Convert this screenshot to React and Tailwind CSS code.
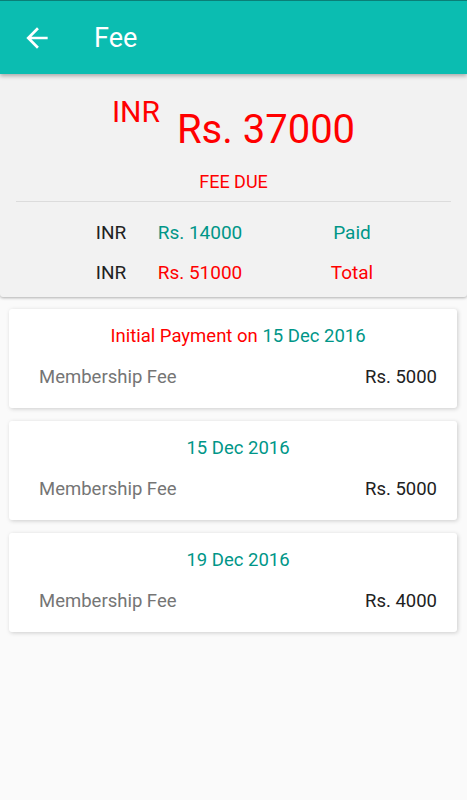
import React from 'react';

const payments = [
  { id: 1, initial: true, date: '15 Dec 2016', item: 'Membership Fee', amount: 'Rs. 5000' },
  { id: 2, initial: false, date: '15 Dec 2016', item: 'Membership Fee', amount: 'Rs. 5000' },
  { id: 3, initial: false, date: '19 Dec 2016', item: 'Membership Fee', amount: 'Rs. 4000' },
];

function BackArrow() {
  return (
    <svg viewBox="0 0 24 24" className="w-[32px] h-[32px] fill-white">
      <path d="M20 11H7.83l5.59-5.59L12 4l-8 8 8 8 1.41-1.41L7.83 13H20v-2z" />
    </svg>
  );
}

function SummaryRow({ amount, label, color }) {
  return (
    <div className="flex items-center pl-[80px] text-[19px] leading-none">
      <span className="w-[62px] text-center text-[#212121]">INR</span>
      <span className={`w-[116px] text-center ${color}`}>{amount}</span>
      <span className={`w-[100px] ml-[44px] text-center ${color}`}>{label}</span>
    </div>
  );
}

function PaymentCard({ payment }) {
  return (
    <div className="bg-white rounded-[3px] shadow-[1px_1px_4px_rgba(0,0,0,0.18)] pt-[18px] pb-[22px] pl-[30px] pr-[20px]">
      <div className="text-center text-[18.5px] leading-none">
        {payment.initial && <span className="text-[#ff0000]">Initial Payment on </span>}
        <span className="text-[#009688]">{payment.date}</span>
      </div>
      <div className="flex justify-between mt-[22px] text-[18.5px] leading-none">
        <span className="text-[#757575]">{payment.item}</span>
        <span className="text-[#212121]">{payment.amount}</span>
      </div>
    </div>
  );
}

export default function App() {
  return (
    <div className="min-h-[800px] bg-[#fafafa] font-['Roboto',sans-serif]">
      {/* Toolbar */}
      <header className="relative z-20 h-[74px] bg-[#0bbdb1] border-t border-[#0a7f77] flex items-center shadow-[0_2px_4px_rgba(0,0,0,0.3)]">
        <button className="ml-[21px] mt-[1px]">
          <BackArrow />
        </button>
        <h1 className="ml-[41px] mt-[2px] text-[27px] leading-none text-white">Fee</h1>
      </header>

      {/* Summary */}
      <div className="relative z-10 bg-[#f2f2f2] rounded-b-[3px] shadow-[0_1px_3px_rgba(0,0,0,0.3)] pb-[15px]">
        <div className="flex justify-center items-start pt-[23px] text-[#ff0000] leading-none">
          <span className="text-[30px]">INR</span>
          <span className="text-[40px] mt-[13px] ml-[17px]">Rs. 37000</span>
        </div>
        <div className="mt-[23px] text-center text-[18px] leading-none text-[#ff0000]">FEE DUE</div>
        <div className="mt-[10px] mx-[16px] h-px bg-[#dcdcdc]" />
        <div className="mt-[21px]">
          <SummaryRow amount="Rs. 14000" label="Paid" color="text-[#009688]" />
        </div>
        <div className="mt-[21px]">
          <SummaryRow amount="Rs. 51000" label="Total" color="text-[#ff0000]" />
        </div>
      </div>

      {/* Payments */}
      <div className="flex flex-col gap-[13px] pt-[12px] pl-[9px] pr-[10px]">
        {payments.map((p) => (
          <PaymentCard key={p.id} payment={p} />
        ))}
      </div>
    </div>
  );
}
